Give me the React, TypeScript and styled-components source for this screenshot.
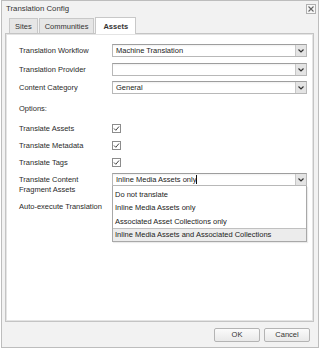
import { createGlobalStyle, styled } from "styled-components";

const GlobalStyle = createGlobalStyle`
  html, body {
    margin: 0;
    padding: 0;
    background: #ffffff;
  }
  body {
    font-family: "Liberation Sans", Arial, sans-serif;
    font-size: 7.5px;
    color: #2a2a2a;
  }
`;

const Chevron = () => (
  <svg width="6" height="4" viewBox="0 0 6 4">
    <path d="M0.5 0.5 L3 3 L5.5 0.5" fill="none" stroke="#333" strokeWidth="1.2" />
  </svg>
);

const CheckIcon = () => (
  <svg width="9" height="9" viewBox="0 0 9 9">
    <rect x="0.5" y="0.5" width="8" height="8" fill="#fff" stroke="#8c8c8c" />
    <path d="M2 4.5 L3.8 6.3 L7 2.5" fill="none" stroke="#444" strokeWidth="1" />
  </svg>
);

interface SelectProps {
  value: string;
  caret?: boolean;
}
const Select = ({ value, caret }: SelectProps) => (
  <SelectBox>
    <SelectText>
      {value}
      {caret && <Caret />}
    </SelectText>
    <ArrowBox>
      <Chevron />
    </ArrowBox>
  </SelectBox>
);

const options = [
  "Do not translate",
  "Inline Media Assets only",
  "Associated Asset Collections only",
  "Inline Media Assets and Associated Collections",
];

export default function App() {
  return (
    <>
      <GlobalStyle />
      <Window>
        <TitleBar>
          <span>Translation Config</span>
          <CloseButton>
            <svg width="6" height="6" viewBox="0 0 6 6">
              <path d="M0.5 0.5 L5.5 5.5 M5.5 0.5 L0.5 5.5" stroke="#666" strokeWidth="1.1" />
            </svg>
          </CloseButton>
        </TitleBar>
        <TabStrip>
          <Tab>Sites</Tab>
          <Tab>Communities</Tab>
          <Tab $active>Assets</Tab>
        </TabStrip>
        <Panel>
          <Row $mt={0}>
            <Label>Translation Workflow</Label>
            <Select value="Machine Translation" />
          </Row>
          <Row $mt={6}>
            <Label>Translation Provider</Label>
            <Select value="" />
          </Row>
          <Row $mt={5}>
            <Label>Content Category</Label>
            <Select value="General" />
          </Row>
          <Row $mt={8}>
            <Label>Options:</Label>
          </Row>
          <Row $mt={8}>
            <Label>Translate Assets</Label>
            <CheckIcon />
          </Row>
          <Row $mt={5}>
            <Label>Translate Metadata</Label>
            <CheckIcon />
          </Row>
          <Row $mt={5}>
            <Label>Translate Tags</Label>
            <CheckIcon />
          </Row>
          <TallRow>
            <TwoLineLabel>
              Translate Content
              <br />
              Fragment Assets
            </TwoLineLabel>
            <SelectWrap>
              <Select value="Inline Media Assets only" caret />
              <DropList>
                {options.map((o, i) => (
                  <DropItem key={o} $selected={i === options.length - 1}>
                    {o}
                  </DropItem>
                ))}
              </DropList>
            </SelectWrap>
          </TallRow>
          <Row $mt={3}>
            <Label>Auto-execute Translation</Label>
          </Row>
        </Panel>
        <Footer>
          <Button>OK</Button>
          <Button>Cancel</Button>
        </Footer>
      </Window>
    </>
  );
}

const Window = styled.div`
  box-sizing: border-box;
  width: 318px;
  height: 348px;
  margin-left: 1px;
  border: 1px solid #bdbdbd;
  background: #f2f2f2;
  display: flex;
  flex-direction: column;
`;

const TitleBar = styled.div`
  height: 12px;
  display: flex;
  align-items: center;
  justify-content: space-between;
  padding: 1px 2px 0 4px;
  color: #333;
  font-size: 7.8px;
`;

const CloseButton = styled.div`
  box-sizing: border-box;
  width: 10px;
  height: 10px;
  margin-top: 2px;
  border: 1px solid #b0b0b0;
  background: #f7f7f7;
  display: flex;
  align-items: center;
  justify-content: center;
`;

const TabStrip = styled.div`
  height: 19px;
  display: flex;
  align-items: flex-end;
  gap: 1px;
  padding-left: 7px;
`;

const Tab = styled.div<{ $active?: boolean }>`
  box-sizing: border-box;
  height: ${(p) => (p.$active ? 17 : 15)}px;
  padding: 0 ${(p) => (p.$active ? 7 : 5)}px;
  display: flex;
  align-items: center;
  border: 1px solid #c8c8c8;
  border-bottom: none;
  margin-bottom: ${(p) => (p.$active ? -1 : 0)}px;
  background: ${(p) => (p.$active ? "#ffffff" : "#e6e6e6")};
  font-weight: ${(p) => (p.$active ? 700 : 400)};
  color: #333;
  position: relative;
  z-index: 1;
`;

const Panel = styled.div`
  flex: 1;
  margin: 0 4px 0 3px;
  border: 1px solid #c4c4c4;
  box-shadow: inset 0 0 0 1px #e4e4e4;
  background: #ffffff;
  padding: 10px 0 0 13px;
  display: flex;
  flex-direction: column;
`;

const Row = styled.div<{ $mt: number }>`
  display: grid;
  grid-template-columns: 93px 195px;
  align-items: center;
  min-height: 12px;
  margin-top: ${(p) => p.$mt}px;
`;

const TallRow = styled.div`
  display: grid;
  grid-template-columns: 93px 195px;
  align-items: start;
  margin-top: 5px;
  height: 24px;
`;

const Label = styled.div`
  color: #2a2a2a;
  white-space: nowrap;
`;

const TwoLineLabel = styled(Label)`
  line-height: 10px;
  padding-top: 2px;
`;

const SelectBox = styled.div`
  box-sizing: border-box;
  height: 13px;
  display: flex;
  border: 1px solid #b8b8b8;
  border-top-color: #9e9e9e;
  background: linear-gradient(#f0f0f0 0, #ffffff 2px);
`;

const SelectText = styled.div`
  flex: 1;
  display: flex;
  align-items: center;
  padding-left: 3px;
  color: #222;
`;

const Caret = styled.span`
  display: inline-block;
  width: 1px;
  height: 9px;
  background: #111;
`;

const ArrowBox = styled.div`
  width: 10px;
  border-left: 1px solid #c8c8c8;
  background: #e4e4e4;
  display: flex;
  align-items: center;
  justify-content: center;
`;

const SelectWrap = styled.div`
  position: relative;
`;

const DropList = styled.div`
  position: absolute;
  top: 13px;
  left: 0;
  box-sizing: border-box;
  width: 195px;
  padding-top: 1px;
  border: 1px solid #a8a8a8;
  border-top: none;
  background: #ffffff;
  box-shadow: 1px 1px 1px rgba(0, 0, 0, 0.08);
  z-index: 2;
`;

const DropItem = styled.div<{ $selected?: boolean }>`
  box-sizing: border-box;
  height: 13.5px;
  display: flex;
  align-items: center;
  padding-left: 2px;
  color: #222;
  background: ${(p) => (p.$selected ? "#ececec" : "transparent")};
  border-top: 1px solid ${(p) => (p.$selected ? "#c0c0c0" : "transparent")};
`;

const Footer = styled.div`
  height: 25px;
  display: flex;
  align-items: center;
  justify-content: flex-end;
  gap: 4px;
  padding-right: 8px;
`;

const Button = styled.div`
  box-sizing: border-box;
  width: 46px;
  height: 14px;
  border: 1px solid #b4b4b4;
  border-radius: 2px;
  background: linear-gradient(#fbfbfb, #e9e9e9);
  display: flex;
  align-items: center;
  justify-content: center;
  color: #333;
`;
